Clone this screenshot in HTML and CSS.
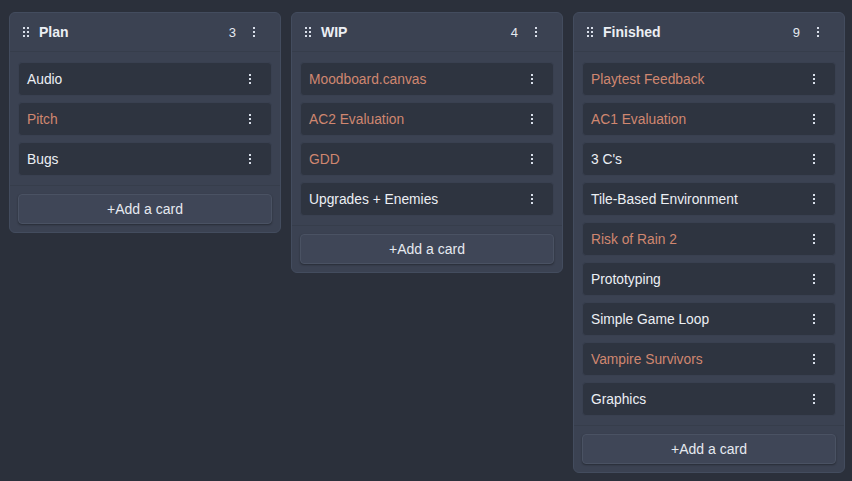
FILE: index.html
```html
<!DOCTYPE html>
<html>
<head>
<meta charset="utf-8">
<link rel="stylesheet" href="styles.css">
</head>
<body>
<div class="board">
  <section class="lane">
    <header class="lane-head">
      <svg class="grip" width="6" height="10" viewBox="0 0 6 10"><rect x="0" y="0" width="2" height="2"/><rect x="4" y="0" width="2" height="2"/><rect x="0" y="4" width="2" height="2"/><rect x="4" y="4" width="2" height="2"/><rect x="0" y="8" width="2" height="2"/><rect x="4" y="8" width="2" height="2"/></svg>
      <span class="lane-title">Plan</span>
      <span class="lane-count">3</span>
      <svg class="more" width="2" height="10" viewBox="0 0 2 10"><rect y="0" width="2" height="2"/><rect y="4" width="2" height="2"/><rect y="8" width="2" height="2"/></svg>
    </header>
    <div class="cards">
      <div class="card"><span>Audio</span><svg class="more" width="2" height="10" viewBox="0 0 2 10"><rect y="0" width="2" height="2"/><rect y="4" width="2" height="2"/><rect y="8" width="2" height="2"/></svg></div>
      <div class="card link"><span>Pitch</span><svg class="more" width="2" height="10" viewBox="0 0 2 10"><rect y="0" width="2" height="2"/><rect y="4" width="2" height="2"/><rect y="8" width="2" height="2"/></svg></div>
      <div class="card"><span>Bugs</span><svg class="more" width="2" height="10" viewBox="0 0 2 10"><rect y="0" width="2" height="2"/><rect y="4" width="2" height="2"/><rect y="8" width="2" height="2"/></svg></div>
    </div>
    <footer class="lane-foot"><button class="add">+Add a card</button></footer>
  </section>

  <section class="lane">
    <header class="lane-head">
      <svg class="grip" width="6" height="10" viewBox="0 0 6 10"><rect x="0" y="0" width="2" height="2"/><rect x="4" y="0" width="2" height="2"/><rect x="0" y="4" width="2" height="2"/><rect x="4" y="4" width="2" height="2"/><rect x="0" y="8" width="2" height="2"/><rect x="4" y="8" width="2" height="2"/></svg>
      <span class="lane-title">WIP</span>
      <span class="lane-count">4</span>
      <svg class="more" width="2" height="10" viewBox="0 0 2 10"><rect y="0" width="2" height="2"/><rect y="4" width="2" height="2"/><rect y="8" width="2" height="2"/></svg>
    </header>
    <div class="cards">
      <div class="card link"><span>Moodboard.canvas</span><svg class="more" width="2" height="10" viewBox="0 0 2 10"><rect y="0" width="2" height="2"/><rect y="4" width="2" height="2"/><rect y="8" width="2" height="2"/></svg></div>
      <div class="card link"><span>AC2 Evaluation</span><svg class="more" width="2" height="10" viewBox="0 0 2 10"><rect y="0" width="2" height="2"/><rect y="4" width="2" height="2"/><rect y="8" width="2" height="2"/></svg></div>
      <div class="card link"><span>GDD</span><svg class="more" width="2" height="10" viewBox="0 0 2 10"><rect y="0" width="2" height="2"/><rect y="4" width="2" height="2"/><rect y="8" width="2" height="2"/></svg></div>
      <div class="card"><span>Upgrades + Enemies</span><svg class="more" width="2" height="10" viewBox="0 0 2 10"><rect y="0" width="2" height="2"/><rect y="4" width="2" height="2"/><rect y="8" width="2" height="2"/></svg></div>
    </div>
    <footer class="lane-foot"><button class="add">+Add a card</button></footer>
  </section>

  <section class="lane">
    <header class="lane-head">
      <svg class="grip" width="6" height="10" viewBox="0 0 6 10"><rect x="0" y="0" width="2" height="2"/><rect x="4" y="0" width="2" height="2"/><rect x="0" y="4" width="2" height="2"/><rect x="4" y="4" width="2" height="2"/><rect x="0" y="8" width="2" height="2"/><rect x="4" y="8" width="2" height="2"/></svg>
      <span class="lane-title">Finished</span>
      <span class="lane-count">9</span>
      <svg class="more" width="2" height="10" viewBox="0 0 2 10"><rect y="0" width="2" height="2"/><rect y="4" width="2" height="2"/><rect y="8" width="2" height="2"/></svg>
    </header>
    <div class="cards">
      <div class="card link"><span>Playtest Feedback</span><svg class="more" width="2" height="10" viewBox="0 0 2 10"><rect y="0" width="2" height="2"/><rect y="4" width="2" height="2"/><rect y="8" width="2" height="2"/></svg></div>
      <div class="card link"><span>AC1 Evaluation</span><svg class="more" width="2" height="10" viewBox="0 0 2 10"><rect y="0" width="2" height="2"/><rect y="4" width="2" height="2"/><rect y="8" width="2" height="2"/></svg></div>
      <div class="card"><span>3 C's</span><svg class="more" width="2" height="10" viewBox="0 0 2 10"><rect y="0" width="2" height="2"/><rect y="4" width="2" height="2"/><rect y="8" width="2" height="2"/></svg></div>
      <div class="card"><span>Tile-Based Environment</span><svg class="more" width="2" height="10" viewBox="0 0 2 10"><rect y="0" width="2" height="2"/><rect y="4" width="2" height="2"/><rect y="8" width="2" height="2"/></svg></div>
      <div class="card link"><span>Risk of Rain 2</span><svg class="more" width="2" height="10" viewBox="0 0 2 10"><rect y="0" width="2" height="2"/><rect y="4" width="2" height="2"/><rect y="8" width="2" height="2"/></svg></div>
      <div class="card"><span>Prototyping</span><svg class="more" width="2" height="10" viewBox="0 0 2 10"><rect y="0" width="2" height="2"/><rect y="4" width="2" height="2"/><rect y="8" width="2" height="2"/></svg></div>
      <div class="card"><span>Simple Game Loop</span><svg class="more" width="2" height="10" viewBox="0 0 2 10"><rect y="0" width="2" height="2"/><rect y="4" width="2" height="2"/><rect y="8" width="2" height="2"/></svg></div>
      <div class="card link"><span>Vampire Survivors</span><svg class="more" width="2" height="10" viewBox="0 0 2 10"><rect y="0" width="2" height="2"/><rect y="4" width="2" height="2"/><rect y="8" width="2" height="2"/></svg></div>
      <div class="card"><span>Graphics</span><svg class="more" width="2" height="10" viewBox="0 0 2 10"><rect y="0" width="2" height="2"/><rect y="4" width="2" height="2"/><rect y="8" width="2" height="2"/></svg></div>
    </div>
    <footer class="lane-foot"><button class="add">+Add a card</button></footer>
  </section>
</div>
</body>
</html>
```

FILE: styles.css
```css
html, body {
  margin: 0;
  padding: 0;
  background: #2b303b;
  height: 100%;
}
body {
  font-family: "Liberation Sans", Arial, sans-serif;
  font-size: 14px;
  color: #e5e9f0;
}
.board {
  display: flex;
  align-items: flex-start;
  gap: 10px;
  padding: 12px 9px;
}
.lane {
  width: 272px;
  flex: none;
  box-sizing: border-box;
  background: #3b4252;
  border: 1px solid #434c5e;
  border-radius: 6px;
  display: flex;
  flex-direction: column;
}
.lane-head {
  height: 39px;
  box-sizing: border-box;
  display: flex;
  align-items: center;
  padding: 0 25px 0 13px;
  border-bottom: 1px solid #363d4b;
}
.grip {
  fill: #d8dee9;
  margin-right: 10px;
}
.lane-title {
  font-weight: 700;
  font-size: 14px;
  color: #eceff4;
  flex: 1;
}
.lane-count {
  font-size: 13px;
  color: #e5e9f0;
  margin-right: 17px;
}
.more {
  fill: #d8dee9;
  flex: none;
}
.cards {
  display: flex;
  flex-direction: column;
  gap: 6px;
  padding: 10px 8px 9px 8px;
  border-bottom: 1px solid #363d4b;
}
.card {
  height: 34px;
  box-sizing: border-box;
  background: #2e3440;
  border: 1px solid #394050;
  border-radius: 4px;
  display: flex;
  align-items: center;
  justify-content: space-between;
  padding: 0 20px 0 8px;
  color: #eceff4;
  font-size: 13.8px;
}
.card.link span {
  color: #d08770;
}
.lane-foot {
  padding: 8px 8px 8px 8px;
}
.add {
  width: 100%;
  height: 30px;
  background: #3f4657;
  border: 1px solid #4a5263;
  border-radius: 4px;
  box-shadow: 0 1px 2px rgba(0,0,0,0.35);
  color: #e5e9f0;
  font-family: "Liberation Sans", Arial, sans-serif;
  font-size: 14px;
  padding: 0;
}
```
